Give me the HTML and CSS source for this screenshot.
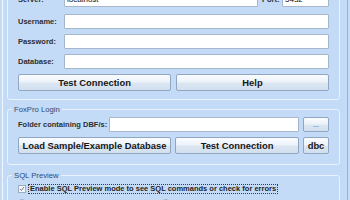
FILE: index.html
```html
<!DOCTYPE html>
<html lang="en">
<head>
<meta charset="utf-8">
<title>FoxPro Import</title>
<link rel="stylesheet" href="styles.css">
</head>
<body>
<div class="page">
  <fieldset class="group group-login">
    <div class="field-row server-row">
      <label class="lbl lbl-col">Server:</label>
      <input class="input grow" type="text" value="localhost">
      <label class="lbl port-lbl">Port:</label>
      <input class="input port" type="text" value="5432">
    </div>
    <div class="field-row">
      <label class="lbl lbl-col">Username:</label>
      <input class="input grow" type="text" value="">
    </div>
    <div class="field-row">
      <label class="lbl lbl-col">Password:</label>
      <input class="input grow" type="password" value="">
    </div>
    <div class="field-row">
      <label class="lbl lbl-col">Database:</label>
      <input class="input grow" type="text" value="">
    </div>
    <div class="btn-row btn-row-two">
      <button class="btn">Test Connection</button>
      <button class="btn">Help</button>
    </div>
  </fieldset>

  <fieldset class="group group-fox">
    <legend class="legend">FoxPro Login</legend>
    <div class="folder-row">
      <label class="lbl">Folder containing DBF/s:</label>
      <input class="input" type="text" value="">
      <button class="btn btn-small">...</button>
    </div>
    <div class="btn-row btn-row-three">
      <button class="btn">Load Sample/Example Database</button>
      <button class="btn">Test Connection</button>
      <button class="btn">dbc</button>
    </div>
  </fieldset>

  <fieldset class="group group-sql">
    <legend class="legend">SQL Preview</legend>
    <div class="check-row">
      <span class="checkbox"><svg viewBox="0 0 8 8" width="8" height="8"><path d="M1.5 3.8 L3.2 6 L6.6 1.4" fill="none" stroke="#5a6270" stroke-width="1.1"/></svg></span>
      <span class="check-label">Enable SQL Preview mode to see SQL commands or check for errors</span>
    </div>
    <div class="radio-row">
      <span class="radio-item"><span class="radio"></span><span class="radio-label">Show SQL Preview For Each File</span></span>
      <span class="radio-item"><span class="radio"></span><span class="radio-label">Show SQL Preview For Each Table</span></span>
    </div>
  </fieldset>
</div>
</body>
</html>
```

FILE: styles.css
```css
* { box-sizing: border-box; }

html, body {
  margin: 0;
  padding: 0;
}

body {
  width: 350px;
  height: 200px;
  overflow: hidden;
  background: #c4dbf7;
  font-family: "Liberation Sans", Arial, sans-serif;
  color: #2b2b2b;
}

.page {
  margin: -30px 0 0 2px;
  width: 346px;
  height: 240px;
  padding: 0 0 0 4px;
  border-left: 1px solid #f1f7fe;
  border-right: 1px solid #9fb2c9;
}

.group {
  margin: 0;
  width: 333px;
  min-width: 0;
  border: 1px solid #eaf2fc;
  border-radius: 3px;
  padding: 0 10px 8px 10px;
}

.group-login {
  padding-top: 21px;
}

.group-fox {
  margin-top: 4px;
  padding-top: 2px;
  padding-bottom: 10px;
}

.group-sql {
  margin-top: 5px;
  padding-top: 2px;
}

.legend {
  font-size: 7.7px;
  line-height: 11px;
  padding: 0 2px;
  margin-left: -6px;
  color: #2c4a74;
}

.lbl {
  font-size: 7.5px;
  font-weight: bold;
  color: #2e2e2e;
  white-space: nowrap;
}

.lbl-col {
  width: 46px;
  flex: none;
}

.field-row {
  display: flex;
  align-items: center;
  height: 15px;
  margin-bottom: 5px;
}

.server-row {
  margin-bottom: 7px;
}

.input {
  height: 15px;
  min-width: 0;
  margin: 0;
  padding: 0 2px;
  border: 1px solid #a6b7cc;
  border-radius: 1px;
  background: #ffffff;
  font-family: "Liberation Sans", Arial, sans-serif;
  font-size: 8px;
  color: #111;
  outline: none;
}

.grow {
  flex: 1 1 auto;
  width: 100%;
}

.server-row .grow {
  flex: none;
  width: 194px;
}

.port-lbl {
  width: 20px;
  margin-left: 4px;
}

.port {
  width: 47px;
  flex: none;
}

.btn-row {
  display: grid;
  height: 17px;
}

.btn-row-two {
  grid-template-columns: 153px 153px;
  column-gap: 5px;
}

.btn-row-three {
  grid-template-columns: 153px 124px 26px;
  column-gap: 4px;
}

.btn {
  height: 17px;
  margin: 0;
  padding: 0;
  border: 1px solid #90a6c1;
  border-radius: 2px;
  background: linear-gradient(#fafcff 0%, #edf3fa 45%, #dbe6f2 55%, #d2dfee 100%);
  font-family: "Liberation Sans", Arial, sans-serif;
  font-size: 9.4px;
  font-weight: bold;
  color: #161616;
  white-space: nowrap;
}

.folder-row {
  display: grid;
  grid-template-columns: 87px 190px 26px;
  column-gap: 4px;
  align-items: center;
  height: 15px;
  margin-bottom: 5px;
}

.folder-row .input {
  width: 100%;
}

.btn-small {
  height: 15px;
  font-size: 7px;
  font-weight: normal;
  color: #3a4a66;
  line-height: 8px;
}

.check-row {
  display: flex;
  align-items: center;
  height: 11px;
  margin-bottom: 3px;
}

.checkbox {
  width: 8px;
  height: 8px;
  flex: none;
  border: 1px solid #9badc3;
  background: #f3f7fc;
  display: flex;
  align-items: center;
  justify-content: center;
}

.checkbox svg {
  display: block;
  width: 6px;
  height: 6px;
}

.check-label {
  margin-left: 2px;
  height: 10px;
  line-height: 8px;
  padding: 0 1px;
  border: 1px dotted #3a3a3a;
  font-size: 7.5px;
  font-weight: bold;
  color: #1e1e1e;
  white-space: nowrap;
}

.radio-row {
  display: flex;
  gap: 16px;
  height: 11px;
  align-items: center;
}

.radio-item {
  display: flex;
  align-items: center;
  gap: 3px;
}

.radio {
  width: 8px;
  height: 8px;
  border-radius: 50%;
  border: 1px solid #9badc3;
  background: #f3f7fc;
}

.radio-label {
  font-size: 7.5px;
  font-weight: bold;
  color: #2a2a2a;
  white-space: nowrap;
}
```
